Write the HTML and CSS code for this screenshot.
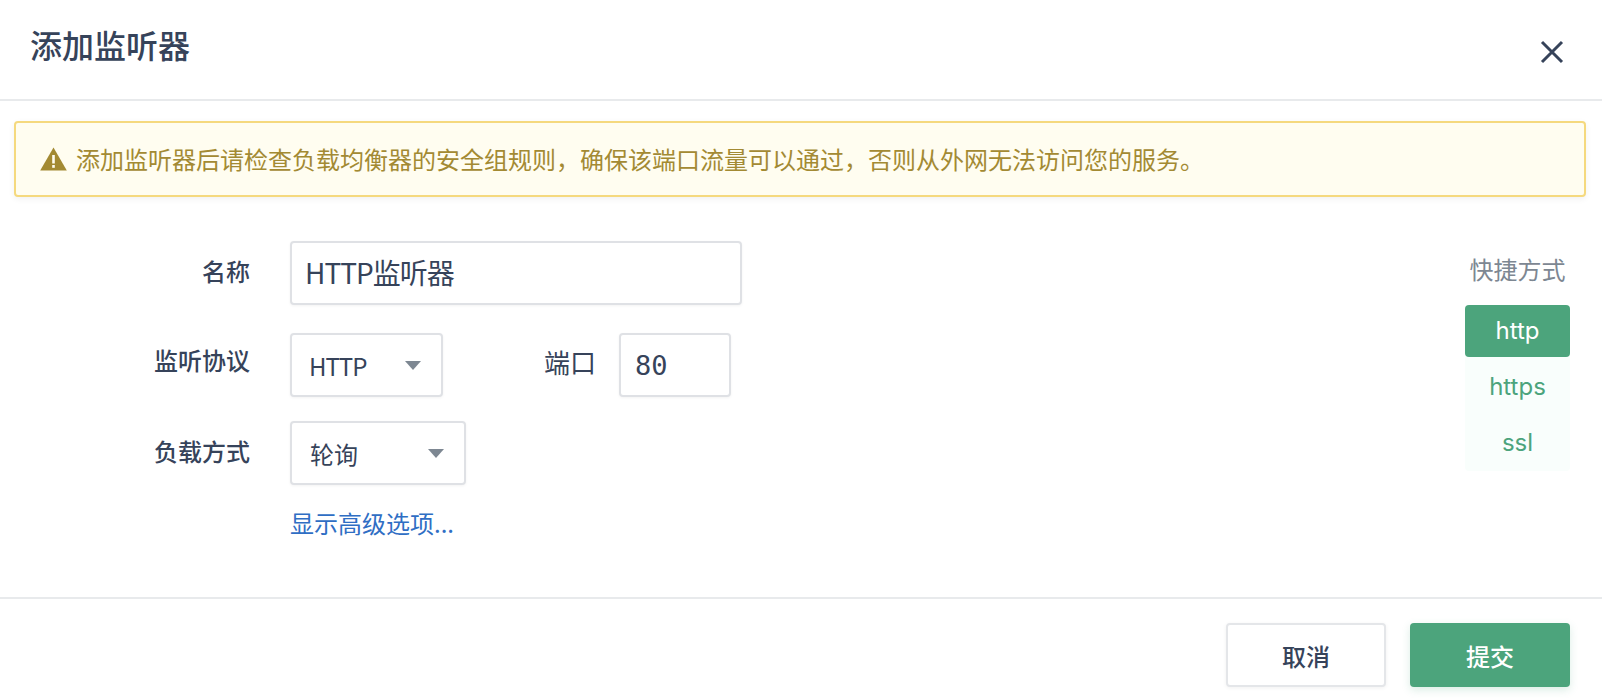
FILE: index.html
```html
<!DOCTYPE html>
<html lang="zh-CN">
<head>
  <meta charset="UTF-8" />
  <title>添加监听器</title>
  <link rel="stylesheet" href="styles.css">
</head>
<body>
  <div class="modal">
    <div class="modal-header">
      <h2>添加监听器</h2>
      <svg class="close" width="24" height="24" viewBox="0 0 24 24"><path d="M2 2 L22 22 M22 2 L2 22" /></svg>
    </div>

    <div class="alert">
      <svg class="alert-icon" width="27" height="24" viewBox="0 0 27 24">
        <path d="M13.5 0.5 L26.8 23.5 L0.2 23.5 Z" fill="#a38a33" />
        <rect x="12.2" y="8" width="2.6" height="8.5" fill="#fffdf0" />
        <rect x="12.2" y="18" width="2.6" height="2.8" fill="#fffdf0" />
      </svg>
      <span>添加监听器后请检查负载均衡器的安全组规则，确保该端口流量可以通过，否则从外网无法访问您的服务。</span>
    </div>

    <div class="modal-body">
      <form class="form">
        <div class="form-group">
          <label>名称</label>
          <input class="input input-name" type="text" value="HTTP监听器" />
        </div>
        <div class="form-group">
          <label class="label-tight">监听协议</label>
          <div class="select select-protocol"><span>HTTP</span><i class="caret"></i></div>
          <label class="port-label">端口</label>
          <input class="input input-port" type="text" value="80" />
        </div>
        <div class="form-group">
          <label>负载方式</label>
          <div class="select select-method"><span>轮询</span><i class="caret"></i></div>
        </div>
        <a class="more">显示高级选项...</a>
      </form>

      <div class="shortcuts">
        <div class="shortcuts-title">快捷方式</div>
        <ul class="shortcuts-list">
          <li class="active">http</li>
          <li>https</li>
          <li>ssl</li>
        </ul>
      </div>
    </div>

    <div class="modal-footer">
      <button class="btn" type="button">取消</button>
      <button class="btn btn-primary" type="button">提交</button>
    </div>
  </div>
</body>
</html>
```

FILE: styles.css
```css
* {
  box-sizing: border-box;
  margin: 0;
  padding: 0;
}

body {
  background: #fff;
  color: #36435a;
  font-family: "Noto Sans CJK SC", "Noto Sans", sans-serif;
  font-size: 24px;
}

.modal {
  width: 1602px;
  height: 698px;
  overflow: hidden;
}

.modal-header {
  height: 101px;
  border-bottom: 2px solid #e8eaec;
  display: flex;
  justify-content: space-between;
  align-items: flex-start;
  padding: 21px 38px 0 30px;
}

.modal-header h2 {
  font-size: 32px;
  line-height: 46px;
  font-weight: 500;
}

.close {
  margin-top: 19px;
  fill: none;
  stroke: #36435a;
  stroke-width: 3;
}

.alert {
  margin: 20px 16px 0 14px;
  height: 76px;
  display: flex;
  align-items: center;
  gap: 9px;
  padding-left: 24px;
  background: #fffdf0;
  border: 2px solid #f5d97e;
  border-radius: 4px;
  box-shadow: 0 2px 6px rgba(0, 0, 0, 0.06);
  color: #a38a33;
}

.alert span {
  margin-top: -2px;
}

.modal-body {
  height: 402px;
  display: flex;
  justify-content: space-between;
  padding: 44px 32px 0 0;
  border-bottom: 2px solid #e8eaec;
}

.form-group {
  display: flex;
  margin-bottom: 24px;
}

.form-group:first-child {
  margin-bottom: 28px;
}

.form-group label {
  width: 250px;
  margin-right: 40px;
  text-align: right;
  font-weight: 500;
  line-height: 60px;
}

.form-group .label-tight {
  line-height: 54px;
}

.form-group .port-label {
  width: auto;
  margin: 0 22px 0 101px;
  font-size: 26px;
  font-weight: 400;
  line-height: 58px;
}

.input,
.select {
  height: 64px;
  border: 2px solid #dfe1e5;
  border-radius: 4px;
  background: #fff;
  color: #36435a;
  outline: none;
  box-shadow: 0 1px 3px rgba(0, 0, 0, 0.05);
}

.input {
  font-family: inherit;
}

.input-name {
  width: 452px;
  padding: 0 0 2px 13px;
  font-size: 28px;
  letter-spacing: -1px;
}

.input-port {
  width: 112px;
  margin-left: 1px;
  padding-left: 14px;
  font-family: "DejaVu Sans Mono", monospace;
  font-size: 27px;
}

.select {
  display: flex;
  align-items: center;
  justify-content: space-between;
  padding: 0 20px 0 18px;
}

.select-protocol {
  width: 153px;
  padding-left: 17px;
  letter-spacing: -1px;
}

.select-method {
  width: 176px;
}

.caret {
  width: 0;
  height: 0;
  border-left: 8px solid transparent;
  border-right: 8px solid transparent;
  border-top: 9px solid #7d8792;
}

.more {
  display: block;
  margin: -4px 0 0 290px;
  color: #2f6ec4;
  line-height: 36px;
}

.shortcuts {
  width: 105px;
  text-align: center;
}

.shortcuts-title {
  color: #7d8792;
  line-height: 36px;
  margin: 10px 0 18px;
  white-space: nowrap;
}

.shortcuts-list {
  list-style: none;
  background: #f9fefc;
  border-radius: 4px;
  font-family: "Inter", sans-serif;
  font-size: 24px;
  color: #4ca47c;
}

.shortcuts-list li {
  height: 56px;
  line-height: 56px;
}

.shortcuts-list .active {
  height: 52px;
  line-height: 52px;
  margin-bottom: 2px;
  background: #4ca47c;
  border-radius: 4px;
  color: #fff;
}

.modal-footer {
  display: flex;
  justify-content: flex-end;
  gap: 24px;
  padding: 24px 32px 0 0;
}

.btn {
  width: 160px;
  height: 64px;
  border: 2px solid #e4e6e9;
  border-radius: 4px;
  background: #fff;
  color: #36435a;
  font-family: inherit;
  font-size: 24px;
  font-weight: 500;
  box-shadow: 0 1px 4px rgba(0, 0, 0, 0.06);
}

.btn-primary {
  border: none;
  background: #4ca47c;
  color: #fff;
  box-shadow: 0 3px 8px rgba(76, 164, 124, 0.2);
}
```
